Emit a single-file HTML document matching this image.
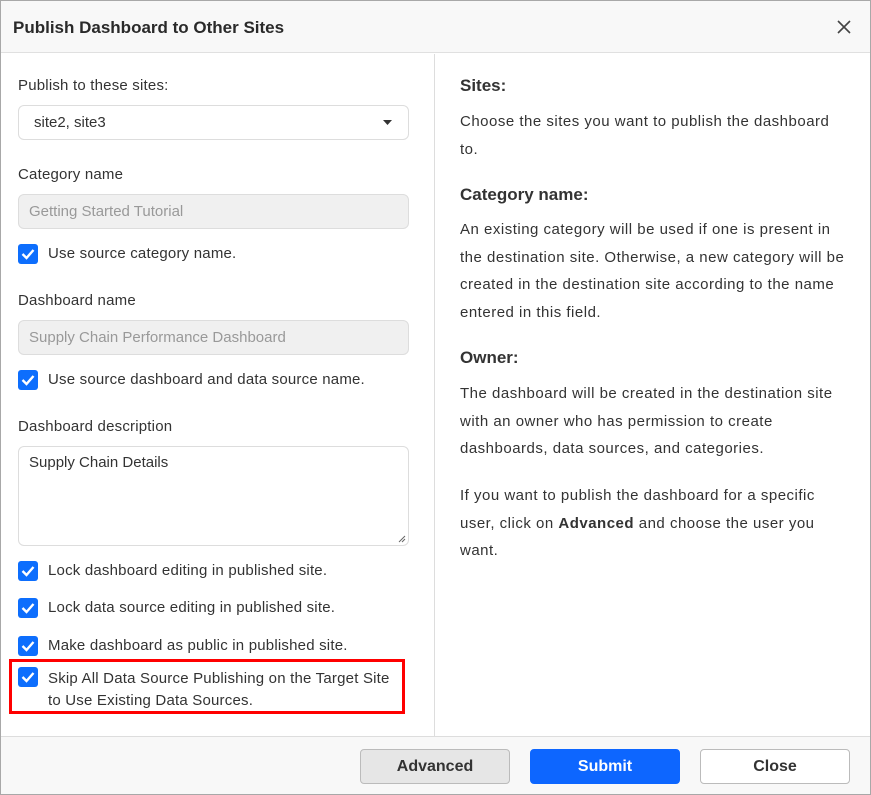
<!DOCTYPE html>
<html><head><style>
*{box-sizing:border-box;margin:0;padding:0}
body{width:871px;height:795px;font-family:"Liberation Sans",sans-serif;color:#333;background:#fff;position:relative;overflow:hidden}
.frame{position:absolute;left:0;top:0;width:871px;height:795px;border:1px solid #a8a8a8}
.hdr{position:absolute;left:1px;top:1px;width:869px;height:52px;background:#f8f8f8;border-bottom:1px solid #e0e0e0}
.hdr h1{position:absolute;left:12px;top:17px;font-size:17px;font-weight:bold;color:#2a2a2a}
.x{position:absolute;left:834px;top:17px;width:18px;height:18px}
.t{position:absolute;font-size:15px;color:#333;white-space:nowrap;letter-spacing:0.2px}
.box{position:absolute;left:18px;width:391px;border:1px solid #ddd;border-radius:6px;font-size:15px;padding-left:10px}
.dis{background:#f0f0f0;color:#999}
.cb{position:absolute;left:18px;width:20px;height:20px;background:#0d6efd;border-radius:3px}
.cb svg{position:absolute;left:3px;top:4px}
.div{position:absolute;left:434px;top:54px;width:1px;height:682px;background:#ddd}
.ftr{position:absolute;left:1px;top:736px;width:869px;height:58px;background:#f8f8f8;border-top:1px solid #ddd}
.btn{position:absolute;top:749px;width:150px;height:35px;border-radius:4px;font-size:16px;font-weight:bold;text-align:center;line-height:33px}
.r{font-size:15px;line-height:27.5px;color:#333;letter-spacing:0.5px;white-space:nowrap}
.rh{position:absolute;left:460px;font-size:17px;font-weight:bold;color:#333}
</style></head><body>
<div class="frame"></div>
<div class="hdr"><h1>Publish Dashboard to Other Sites</h1>
<svg class="x" viewBox="0 0 18 18"><path d="M3 3L15 15M15 3L3 15" stroke="#444" stroke-width="1.6"/></svg></div>

<div class="t" style="left:18px;top:77px">Publish to these sites:</div>
<div class="box" style="top:105px;height:35px;line-height:33px;padding-left:15px;color:#333">site2, site3
<svg style="position:absolute;right:15px;top:14px" width="10" height="6"><path d="M0 0H9L4.5 5Z" fill="#333"/></svg></div>

<div class="t" style="left:18px;top:166px">Category name</div>
<div class="box dis" style="top:194px;height:35px;line-height:33px">Getting Started Tutorial</div>
<div class="cb" style="top:244px"><svg width="14" height="12"><path d="M1.5 6L5.5 10L12.5 2" stroke="#fff" stroke-width="2.4" fill="none"/></svg></div>
<div class="t" style="left:48px;top:245px">Use source category name.</div>

<div class="t" style="left:18px;top:292px">Dashboard name</div>
<div class="box dis" style="top:320px;height:35px;line-height:33px">Supply Chain Performance Dashboard</div>
<div class="cb" style="top:370px"><svg width="14" height="12"><path d="M1.5 6L5.5 10L12.5 2" stroke="#fff" stroke-width="2.4" fill="none"/></svg></div>
<div class="t" style="left:48px;top:371px">Use source dashboard and data source name.</div>

<div class="t" style="left:18px;top:418px">Dashboard description</div>
<div class="box" style="top:446px;height:100px;padding-top:7px">Supply Chain Details
<svg style="position:absolute;right:2px;bottom:2px" width="8" height="8"><path d="M7 1L1 7M7 4L4 7" stroke="#666" stroke-width="1"/></svg></div>

<div class="cb" style="top:561px"><svg width="14" height="12"><path d="M1.5 6L5.5 10L12.5 2" stroke="#fff" stroke-width="2.4" fill="none"/></svg></div>
<div class="t" style="left:48px;top:562px">Lock dashboard editing in published site.</div>
<div class="cb" style="top:598px"><svg width="14" height="12"><path d="M1.5 6L5.5 10L12.5 2" stroke="#fff" stroke-width="2.4" fill="none"/></svg></div>
<div class="t" style="left:48px;top:599px">Lock data source editing in published site.</div>
<div class="cb" style="top:636px"><svg width="14" height="12"><path d="M1.5 6L5.5 10L12.5 2" stroke="#fff" stroke-width="2.4" fill="none"/></svg></div>
<div class="t" style="left:48px;top:637px">Make dashboard as public in published site.</div>
<div class="cb" style="top:667px"><svg width="14" height="12"><path d="M1.5 6L5.5 10L12.5 2" stroke="#fff" stroke-width="2.4" fill="none"/></svg></div>
<div class="t" style="left:48px;top:668px;line-height:22px">Skip All Data Source Publishing on the Target Site<br>to Use Existing Data Sources.</div>
<div style="position:absolute;left:9px;top:659px;width:396px;height:55px;border:3px solid #f00"></div>

<div class="div"></div>

<div class="rh" style="top:76px">Sites:</div>
<div class="r" style="position:absolute;left:460px;top:108px">Choose the sites you want to publish the dashboard<br>to.</div>
<div class="rh" style="top:185px">Category name:</div>
<div class="r" style="position:absolute;left:460px;top:216px">An existing category will be used if one is present in<br>the destination site. Otherwise, a new category will be<br>created in the destination site according to the name<br>entered in this field.</div>
<div class="rh" style="top:348px">Owner:</div>
<div class="r" style="position:absolute;left:460px;top:380px">The dashboard will be created in the destination site<br>with an owner who has permission to create<br>dashboards, data sources, and categories.</div>
<div class="r" style="position:absolute;left:460px;top:482px">If you want to publish the dashboard for a specific<br>user, click on <b>Advanced</b> and choose the user you<br>want.</div>

<div class="ftr"></div>
<div class="btn" style="left:360px;background:#e6e6e6;border:1px solid #bbb;color:#333">Advanced</div>
<div class="btn" style="left:530px;background:#0d66ff;border:1px solid #0d66ff;color:#fff">Submit</div>
<div class="btn" style="left:700px;background:#fff;border:1px solid #bbb;color:#333">Close</div>
</body></html>
